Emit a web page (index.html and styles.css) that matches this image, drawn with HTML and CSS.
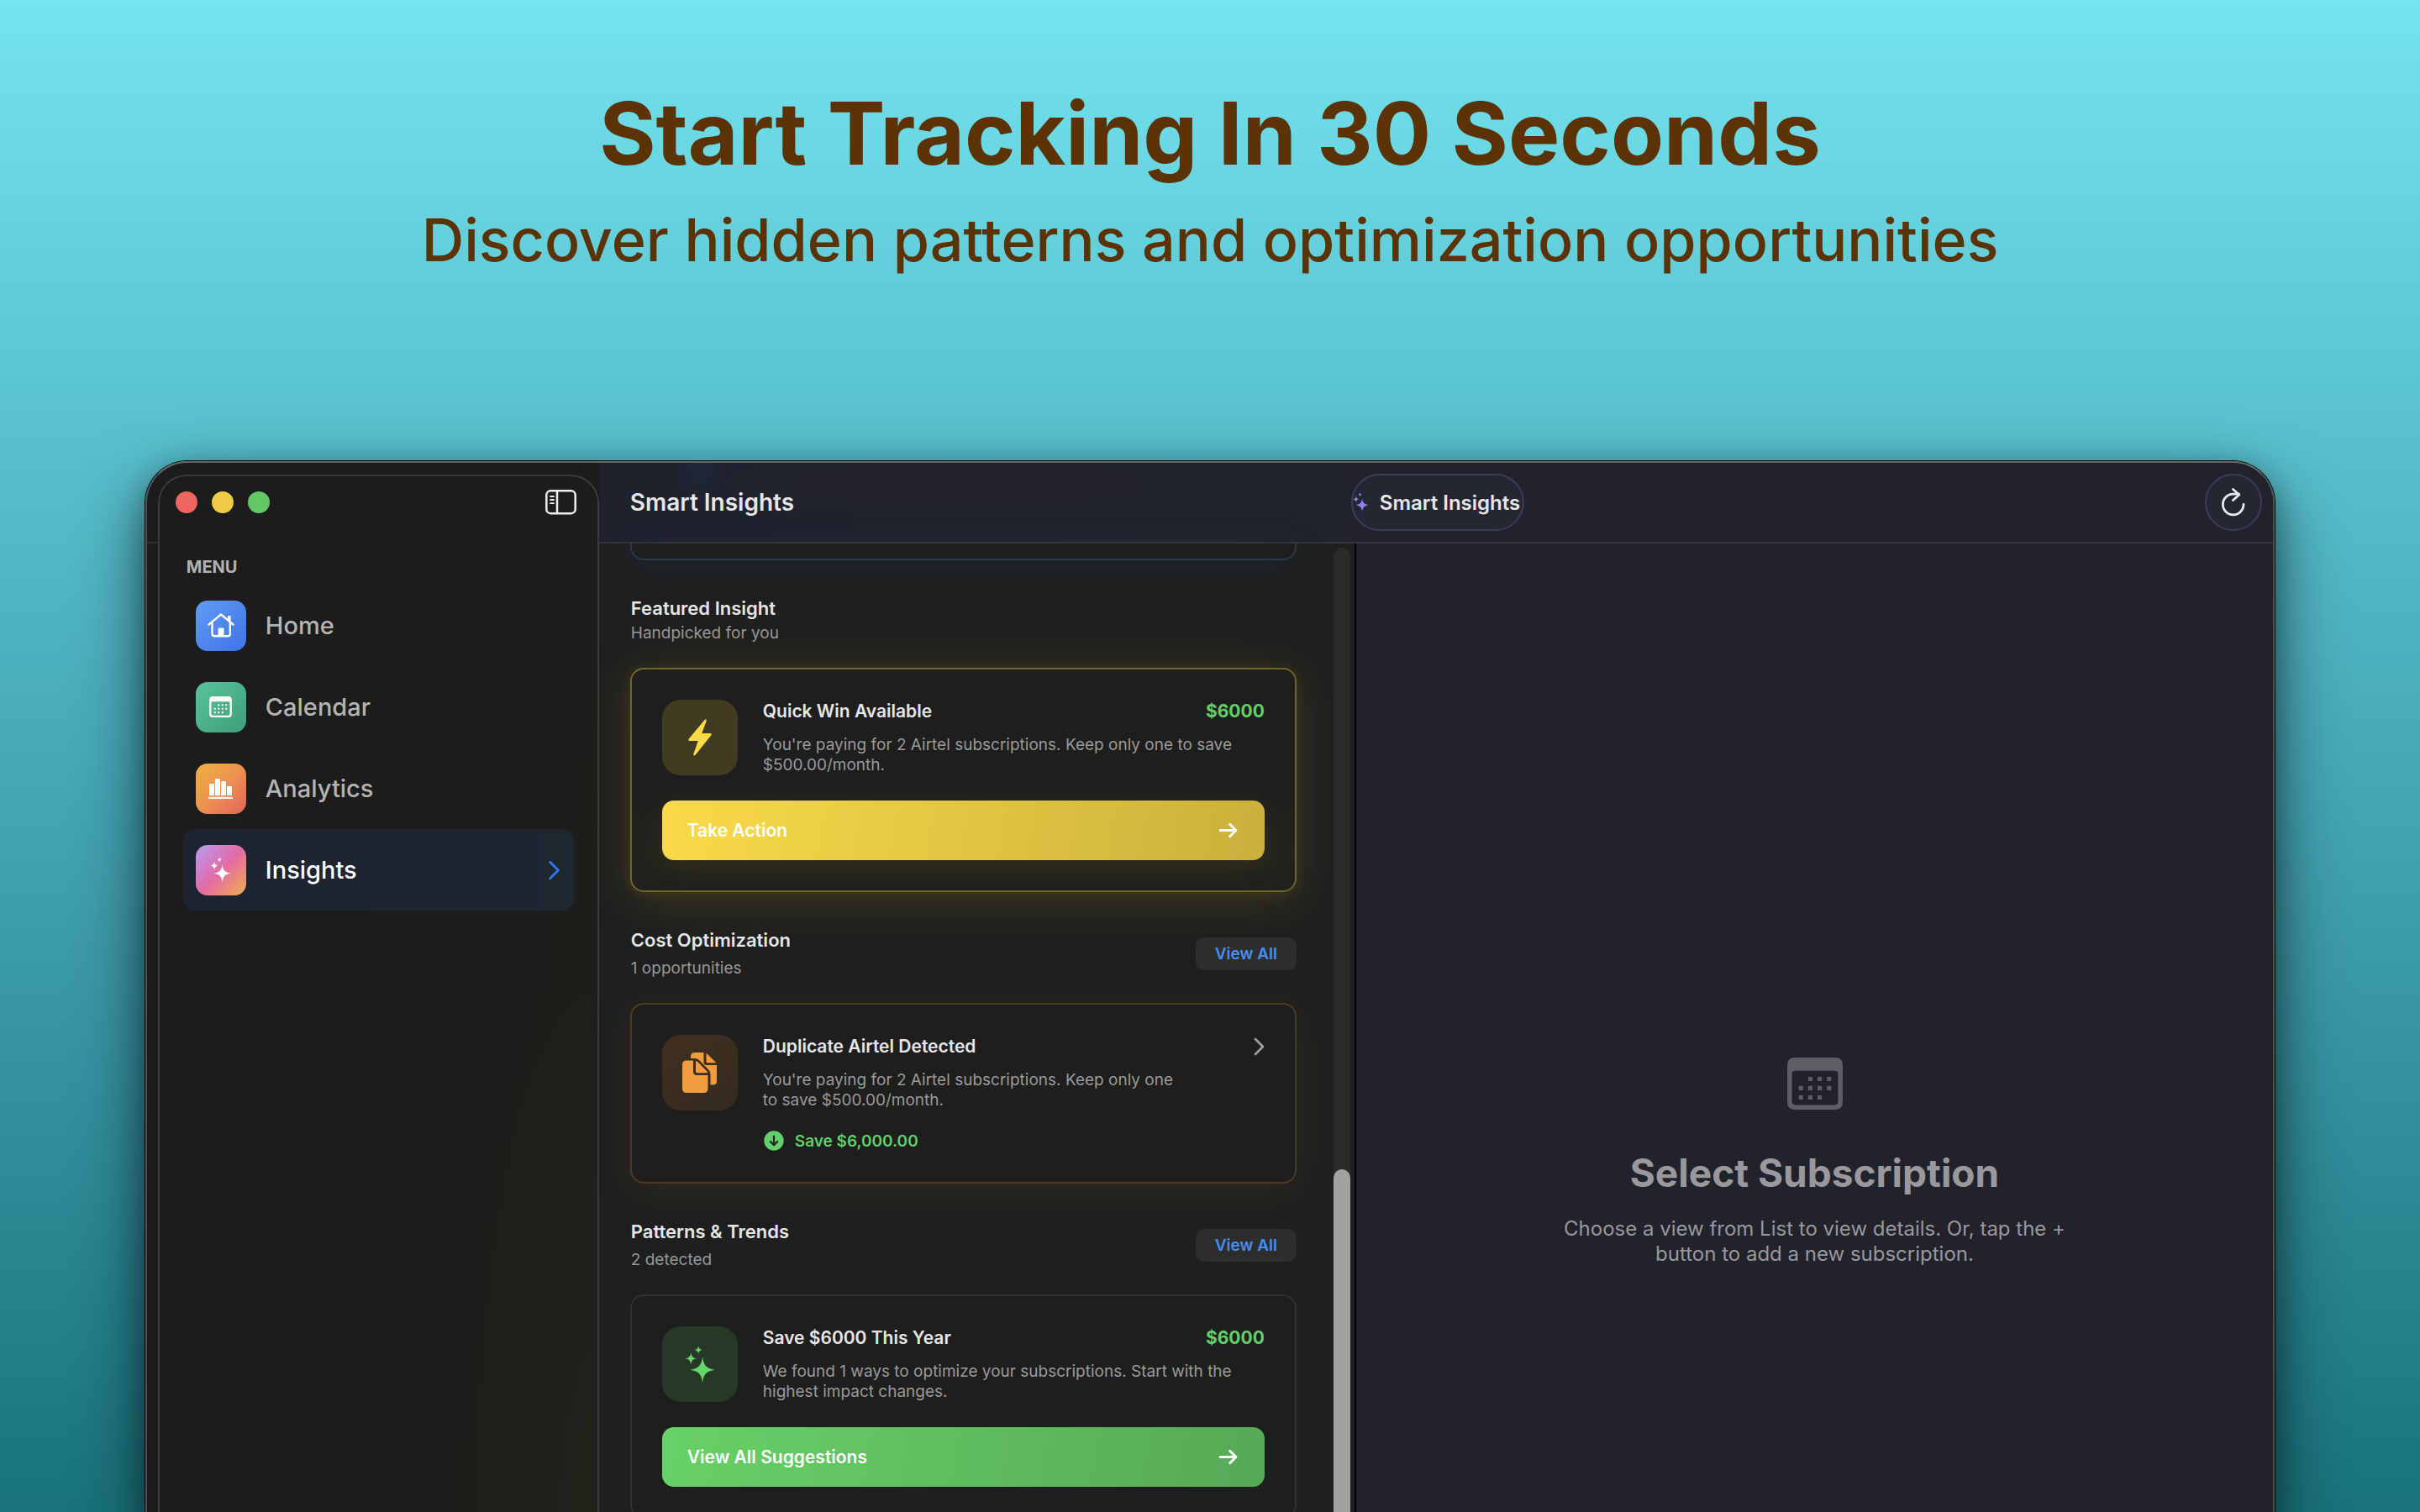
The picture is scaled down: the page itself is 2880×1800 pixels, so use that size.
FILE: index.html
```html
<!DOCTYPE html>
<html lang="en">
<head>
<meta charset="utf-8">
<meta name="viewport" content="width=device-width, initial-scale=1">
<title>Smart Insights</title>
<link rel="stylesheet" href="styles.css">
</head>
<body>
<svg class="defs" aria-hidden="true">
  <defs>
    <symbol id="sparkles" viewBox="0 0 35 44">
      <path d="M20.500 12.500C21.500 22.500 24.500 26.500 35 28C24.500 29.500 21.500 33.500 20.500 43.500C19.500 33.500 16.500 29.500 6 28C16.500 26.500 19.500 22.500 20.500 12.500Z"/>
      <path d="M7 8C7.600 12.500 9.500 14.400 14 15C9.500 15.600 7.600 17.500 7 22C6.400 17.500 4.500 15.600 0 15C4.500 14.400 6.400 12.500 7 8Z"/>
      <path d="M15.700 0.300C16.100 3.300 17.400 4.600 20.400 5C17.400 5.400 16.100 6.700 15.700 9.700C15.300 6.700 14 5.400 11 5C14 4.600 15.300 3.300 15.700 0.300Z"/>
    </symbol>
    <symbol id="calendar-icon" viewBox="0 0 65 61">
      <path fill-rule="evenodd" d="M9 0H56Q65 0 65 9V52Q65 61 56 61H9Q0 61 0 52V9Q0 0 9 0ZM9 15.500Q5.500 15.500 5.500 19V51.500Q5.500 55.500 9.500 55.500H55.500Q59.500 55.500 59.500 51.500V19Q59.500 15.500 56 15.500Z"/>
      <path d="M24.500 22.500h5v5h-5zM35.500 22.500h5v5h-5zM46.500 22.500h5v5h-5zM13.500 33.300h5v5h-5zM24.500 33.300h5v5h-5zM35.500 33.300h5v5h-5zM46.500 33.300h5v5h-5zM13.500 44.200h5v5h-5zM24.500 44.200h5v5h-5zM35.500 44.200h5v5h-5z"/>
    </symbol>
    <symbol id="arrow" viewBox="0 0 22 18">
      <path fill="none" stroke="currentColor" stroke-width="2.800" stroke-linecap="round" stroke-linejoin="round" d="M2 9H20M13 2L20 9L13 16"/>
    </symbol>
    <symbol id="chevron" viewBox="0 0 13 22">
      <path fill="none" stroke="currentColor" stroke-width="2.600" stroke-linecap="round" stroke-linejoin="round" d="M2 2L11 11L2 20"/>
    </symbol>
    <linearGradient id="violet" x1="0" y1="0" x2="0" y2="1">
      <stop offset="0" stop-color="#b06be0"/>
      <stop offset="0.600" stop-color="#8a86f2"/>
      <stop offset="1" stop-color="#7b86f5"/>
    </linearGradient>
  </defs>
</svg>

<header class="hero">
  <h1>Start Tracking In 30 Seconds</h1>
  <p>Discover hidden patterns and optimization opportunities</p>
</header>

<div class="window">
  <aside class="sidebar">
    <div class="panel">
      <div class="panel-head">
        <div class="lights">
          <button class="light red" aria-label="Close"></button>
          <button class="light yellow" aria-label="Minimize"></button>
          <button class="light green" aria-label="Zoom"></button>
        </div>
        <button class="toggle" aria-label="Toggle sidebar">
          <svg width="37" height="30" viewBox="0 0 37 30" fill="none" stroke="#eee" stroke-width="2.500" stroke-linecap="round">
            <rect x="1.300" y="1.300" width="34.400" height="26.900" rx="5"/>
            <path d="M14 2V28"/>
            <path stroke-width="1.800" d="M6 8H10M6 12H10M6 16.200H10"/>
          </svg>
        </button>
      </div>
      <h2 class="menu-label">MENU</h2>
      <nav class="menu">
        <a class="item" href="#home">
          <span class="tile blue">
            <svg width="32" height="29" viewBox="0 0 32 29" fill="none" stroke="#fff" stroke-width="2.400" stroke-linecap="round" stroke-linejoin="round">
              <path d="M1.500 13.500L16 1.500L30.500 13.500M5.500 11.500V24.500Q5.500 27.300 8.300 27.300H24Q26.800 27.300 26.800 24.500V11.500"/>
              <path fill="#fff" stroke="none" d="M12.500 27V18.500Q12.500 17.500 13.500 17.500H18.500Q19.500 17.500 19.500 18.500V27ZM24 3H27.500V10L24 7Z"/>
            </svg>
          </span>
          <span>Home</span>
        </a>
        <a class="item" href="#calendar">
          <span class="tile teal"><svg width="27" height="25" fill="#fff"><use href="#calendar-icon"/></svg></span>
          <span>Calendar</span>
        </a>
        <a class="item" href="#analytics">
          <span class="tile orange">
            <svg width="29" height="24" viewBox="0 0 29 24" fill="#fff">
              <rect x="1" y="6" width="6" height="14" rx="1"/>
              <rect x="8" y="0" width="6" height="20" rx="1"/>
              <rect x="15" y="3" width="6" height="17" rx="1"/>
              <rect x="22" y="9" width="6" height="11" rx="1"/>
              <rect x="0" y="21.800" width="29" height="2.200" rx="1"/>
            </svg>
          </span>
          <span>Analytics</span>
        </a>
        <a class="item active" href="#insights" aria-current="page">
          <span class="tile pink"><svg width="25" height="31" fill="#fff"><use href="#sparkles"/></svg></span>
          <span>Insights</span>
          <svg class="item-chevron" width="15" height="24"><use href="#chevron"/></svg>
        </a>
      </nav>
    </div>
  </aside>

  <div class="workspace">
    <div class="toolbar">
      <h2 class="toolbar-title">Smart Insights</h2>
      <button class="pill">
        <svg width="19" height="24" fill="url(#violet)"><use href="#sparkles"/></svg>
        <span>Smart Insights</span>
      </button>
      <button class="refresh" aria-label="Refresh">
        <svg width="28" height="34" viewBox="0 0 28 34" fill="none" stroke="#e8eaec" stroke-width="2.800" stroke-linecap="round" stroke-linejoin="round">
          <path d="M26 19.500A12.300 12.300 0 1 1 13.700 7.200H20.500"/>
          <path d="M13.500 1.500L20.800 8L13.500 14.500"/>
        </svg>
      </button>
    </div>

    <div class="panes">
      <section class="list">
        <div class="list-content">
          <div class="card card-blue"></div>

          <div class="section-head">
            <div class="section-text tight">
              <h3>Featured Insight</h3>
              <p>Handpicked for you</p>
            </div>
          </div>
          <article class="card card-yellow">
            <div class="card-row">
              <span class="badge badge-yellow">
                <svg width="28" height="44" viewBox="0 0 28 44" fill="#fbd943">
                  <path d="M19.800 0.800L0.800 23.500Q-0.700 26 2 26H11.800L6.300 41.500Q6 44.600 8.600 42.800L27.200 19.500Q28.700 17 26 17H16.200L21.800 2.200Q21.900 -0.700 19.800 0.800Z"/>
                </svg>
              </span>
              <div class="card-body">
                <div class="card-title"><h4>Quick Win Available</h4><strong>$6000</strong></div>
                <p>You're paying for 2 Airtel subscriptions. Keep only one to save $500.00/month.</p>
              </div>
            </div>
            <button class="action action-yellow"><span>Take Action</span><svg width="23" height="19"><use href="#arrow"/></svg></button>
          </article>

          <div class="section-head">
            <div class="section-text">
              <h3>Cost Optimization</h3>
              <p>1 opportunities</p>
            </div>
            <button class="view-all">View All</button>
          </div>
          <article class="card card-orange">
            <div class="card-row">
              <span class="badge badge-orange">
                <svg width="41" height="48" viewBox="0 0 41 48" fill="#f19d3f">
                  <path d="M15 0H25.500V11.500Q25.500 15 29 15H41V34Q41 38.500 36.500 38.500H33.500V26Q33.500 23 31.500 20.800L19.500 8.500Q18 7 15 7H10V5Q10 0 15 0Z"/>
                  <path d="M28.500 0.500L40.300 12.200H30Q28.500 12.200 28.500 10.700Z"/>
                  <path d="M5 9.500H13V23Q13 27 17 27H30.500V43Q30.500 48 25.500 48H5Q0 48 0 43V14.500Q0 9.500 5 9.500Z"/>
                  <path d="M16 10Q17.500 10.300 18.500 11.300L29 22Q30 23 30.300 24.300H17.500Q16 24.300 16 22.800Z"/>
                </svg>
              </span>
              <div class="card-body">
                <div class="card-title"><h4>Duplicate Airtel Detected</h4><svg class="card-chevron" width="13" height="22"><use href="#chevron"/></svg></div>
                <p class="narrow">You're paying for 2 Airtel subscriptions. Keep only one to save $500.00/month.</p>
                <div class="saving">
                  <svg width="24" height="24" viewBox="0 0 24 24">
                    <circle cx="12" cy="12" r="11.700" fill="#63cf68"/>
                    <path d="M12 6.500V17M7.800 13L12 17.300L16.200 13" fill="none" stroke="#1f2a1f" stroke-width="2.200" stroke-linecap="round" stroke-linejoin="round"/>
                  </svg>
                  <span>Save $6,000.00</span>
                </div>
              </div>
            </div>
          </article>

          <div class="section-head">
            <div class="section-text">
              <h3>Patterns &amp; Trends</h3>
              <p>2 detected</p>
            </div>
            <button class="view-all">View All</button>
          </div>
          <article class="card">
            <div class="card-row">
              <span class="badge badge-green"><svg width="36" height="45" fill="#66d36c"><use href="#sparkles"/></svg></span>
              <div class="card-body">
                <div class="card-title"><h4>Save $6000 This Year</h4><strong>$6000</strong></div>
                <p>We found 1 ways to optimize your subscriptions. Start with the highest impact changes.</p>
              </div>
            </div>
            <button class="action action-green"><span>View All Suggestions</span><svg width="23" height="19"><use href="#arrow"/></svg></button>
          </article>
        </div>
        <div class="track"><div class="thumb"></div></div>
      </section>

      <section class="detail">
        <svg width="66" height="62" fill="#5d5d64"><use href="#calendar-icon"/></svg>
        <h2>Select Subscription</h2>
        <p>Choose a view from List to view details. Or, tap the + button to add a new subscription.</p>
      </section>
    </div>
  </div>
</div>
</body>
</html>
```
FILE: styles.css
```css
* {
  box-sizing: border-box;
  margin: 0;
  padding: 0;
}

body {
  height: 100vh;
  overflow: hidden;
  display: flex;
  flex-direction: column;
  font-family: Inter, "Liberation Sans", sans-serif;
  color: #e6e6e6;
  background: linear-gradient(#74e4ee, #57bfcc 30%, #3795a3 68%, #18737a);
}

button {
  font: inherit;
  color: inherit;
  border: 0;
  background: none;
}

svg {
  display: block;
  flex: none;
}

.defs {
  position: absolute;
  width: 0;
  height: 0;
}

/* Headline */
.hero {
  flex: none;
  padding: 99px 24px 219px;
  text-align: center;
  color: #5c3307;
}

.hero h1 {
  font-size: 103px;
  line-height: 120px;
  font-weight: 700;
}

.hero p {
  margin-top: 23px;
  font-size: 70px;
  line-height: 88px;
  font-weight: 500;
}

/* App window, running off the bottom of the page */
.window {
  flex: 1 0 auto;
  display: flex;
  margin: 0 6%;
  border: 2px solid #4c5153;
  border-top-color: #5d6869;
  border-bottom: 0;
  border-radius: 50px 50px 0 0;
  overflow: hidden;
  background: linear-gradient(#1c1c1c 94px, #303030 94px, #303030 96px, #1c1c1c 96px);
  box-shadow: 0 0 0 1px #000, 0 30px 80px rgba(0, 0, 0, 0.6), 0 8px 30px rgba(0, 0, 0, 0.25);
}

/* Sidebar */
.sidebar {
  flex: none;
  width: 538px;
  padding: 14px 0 0 13px;
  display: flex;
}

.panel {
  flex: 1;
  border: 2px solid #3b3b3b;
  border-bottom: 0;
  border-radius: 34px 34px 0 0;
  background:
    radial-gradient(160px 700px at 100% 100%, rgba(40, 70, 20, 0.12), transparent),
    linear-gradient(100deg, #1c1c1c 45%, #1e1f1a);
}

.panel-head {
  display: flex;
  justify-content: space-between;
  align-items: center;
  padding: 16px 25px 0 19px;
}

.lights {
  display: flex;
  gap: 17px;
}

.light {
  width: 26px;
  height: 26px;
  border-radius: 50%;
}

.red { background: #ed6660; }
.yellow { background: #f1cb45; }
.green { background: #62c765; }

.menu-label {
  margin: 50px 32px 9px;
  font-size: 20px;
  line-height: 24px;
  font-weight: 700;
  color: #b1b1b1;
}

.menu {
  padding: 0 28px;
}

.item {
  display: flex;
  align-items: center;
  gap: 23px;
  height: 97px;
  padding: 0 16px 0 15px;
  border-radius: 14px;
  font-size: 29px;
  font-weight: 500;
  color: #b4b4b4;
  text-decoration: none;
}

.item.active {
  background: linear-gradient(90deg, #1d2330, #1f2630);
  color: #fff;
}

.item-chevron {
  margin-left: auto;
  color: #2f78f0;
}

.tile {
  display: flex;
  align-items: center;
  justify-content: center;
  width: 60px;
  height: 60px;
  border-radius: 14px;
}

.blue { background: linear-gradient(135deg, #609bf5, #3f74e6); }
.teal { background: linear-gradient(135deg, #58c39b, #3f9f78); }
.orange { background: linear-gradient(135deg, #edb13e, #ec9250 50%, #e0645a); }
.pink { background: linear-gradient(135deg, #b99cf3, #e36ba6 50%, #edb04a); }

/* Toolbar */
.workspace {
  flex: 1;
  min-width: 0;
  display: flex;
  flex-direction: column;
}

.toolbar {
  flex: none;
  display: flex;
  align-items: center;
  height: 96px;
  padding: 0 13px 0 37px;
  border-bottom: 2px solid #34353d;
  background:
    radial-gradient(30px 50px at 122px 0, rgba(30, 60, 110, 0.22), transparent),
    radial-gradient(360px 50px at 440px 24px, rgba(70, 30, 50, 0.16), transparent),
    linear-gradient(90deg, #1e222d, #1f232c 840px, #22222c 920px);
}

.toolbar-title {
  width: 858px;
  font-size: 28px;
  font-weight: 600;
}

.pill {
  display: flex;
  align-items: center;
  gap: 13px;
  width: 206px;
  height: 68px;
  border: 2px solid #3b3e52;
  border-radius: 34px;
  background: #242732;
  font-size: 24px;
  font-weight: 600;
  white-space: nowrap;
}

.refresh {
  display: flex;
  align-items: center;
  justify-content: center;
  width: 68px;
  height: 68px;
  margin-left: auto;
  border: 2px solid #3b3e52;
  border-radius: 50%;
  background: #242732;
}

.panes {
  flex: 1;
  display: flex;
}

/* Insight list */
.list {
  flex: none;
  display: flex;
  width: 901px;
  border-right: 2px solid #000;
  background: #1f1f1f;
}

.list-content {
  flex: 1;
  padding: 0 44px 0 37px;
}

.card {
  padding: 36px;
  border: 2px solid #303030;
  border-radius: 16px;
  background: #1e1e1e;
}

.card-blue {
  height: 20px;
  padding: 0;
  border-color: #273a50;
  border-top: 0;
  border-radius: 0 0 16px 16px;
  box-shadow: 0 8px 40px rgba(30, 80, 130, 0.2);
}

.card-yellow {
  border-color: #6f642b;
  background: linear-gradient(#1e1e1e 50%, #23231d 85%, #20201d);
  box-shadow: 0 8px 56px rgba(150, 140, 30, 0.24), 0 2px 14px rgba(150, 135, 30, 0.16);
}

.card-orange {
  border-color: #4e3a23;
  box-shadow: 0 8px 44px rgba(120, 95, 25, 0.17);
}

.section-head {
  display: flex;
  align-items: center;
  justify-content: space-between;
  margin: 43px 0 29px;
}

.section-text {
  display: flex;
  flex-direction: column;
  gap: 8px;
  padding-left: 1px;
}

.section-text.tight {
  gap: 4px;
}

.section-text h3 {
  font-size: 22px;
  line-height: 28px;
  font-weight: 600;
}

.section-text p {
  font-size: 19px;
  line-height: 24px;
  color: #979797;
}

.view-all {
  width: 120px;
  height: 39px;
  border-radius: 10px;
  background: #2d2d2e;
  color: #468ff0;
  font-size: 19px;
  font-weight: 600;
}

.card-row {
  display: flex;
  align-items: flex-start;
  gap: 30px;
}

.badge {
  flex: none;
  display: flex;
  align-items: center;
  justify-content: center;
  width: 90px;
  height: 90px;
  border-radius: 22px;
}

.badge-yellow { background: #403c22; }
.badge-orange { background: linear-gradient(150deg, #402f21, #332b1e); }
.badge-green { background: #273826; }

.card-body {
  flex: 1;
}

.card-title {
  display: flex;
  align-items: center;
  justify-content: space-between;
  height: 28px;
  font-size: 21px;
  line-height: 28px;
}

.card-title h4 {
  font-size: 21px;
  font-weight: 600;
}

.card-title strong {
  font-weight: 700;
  color: #62cf67;
}

.card-chevron {
  color: #a0a0a0;
}

.card-body p {
  margin-top: 14px;
  font-size: 19px;
  line-height: 24px;
  color: #9a9a9a;
}

.card-body .narrow {
  max-width: 500px;
}

.saving {
  display: flex;
  align-items: center;
  gap: 13px;
  height: 26px;
  margin-top: 23px;
  padding-left: 1px;
  font-size: 19px;
  font-weight: 600;
  color: #62cf67;
}

.action {
  display: flex;
  align-items: center;
  justify-content: space-between;
  width: 100%;
  height: 71px;
  margin-top: 30px;
  padding: 0 32px 0 30px;
  border-radius: 14px;
  font-size: 21px;
  font-weight: 600;
  color: #fff;
}

.action-yellow {
  background: linear-gradient(100deg, #f9da48, #e4c843 45%, #c9b03b);
  box-shadow: 0 8px 30px rgba(150, 130, 30, 0.14);
}

.action-green {
  background: linear-gradient(100deg, #68d168, #56a955);
}

/* Scroll bar */
.track {
  flex: none;
  width: 20px;
  margin: 5px 5px 0 0;
  border-radius: 10px 10px 0 0;
  background: #2a2a2a;
  display: flex;
  align-items: flex-end;
}

.thumb {
  width: 100%;
  height: 36%;
  border-radius: 10px 10px 0 0;
  background: #a2a2a2;
}

/* Empty detail pane */
.detail {
  flex: 1;
  display: flex;
  flex-direction: column;
  align-items: center;
  padding: 34vh 24px 0;
  background: #22222c;
  text-align: center;
}

.detail h2 {
  margin-top: 47px;
  font-size: 46px;
  line-height: 56px;
  font-weight: 700;
  color: #99999d;
}

.detail p {
  max-width: 620px;
  margin-top: 24px;
  font-size: 24px;
  line-height: 30px;
  color: #98989c;
}
```
